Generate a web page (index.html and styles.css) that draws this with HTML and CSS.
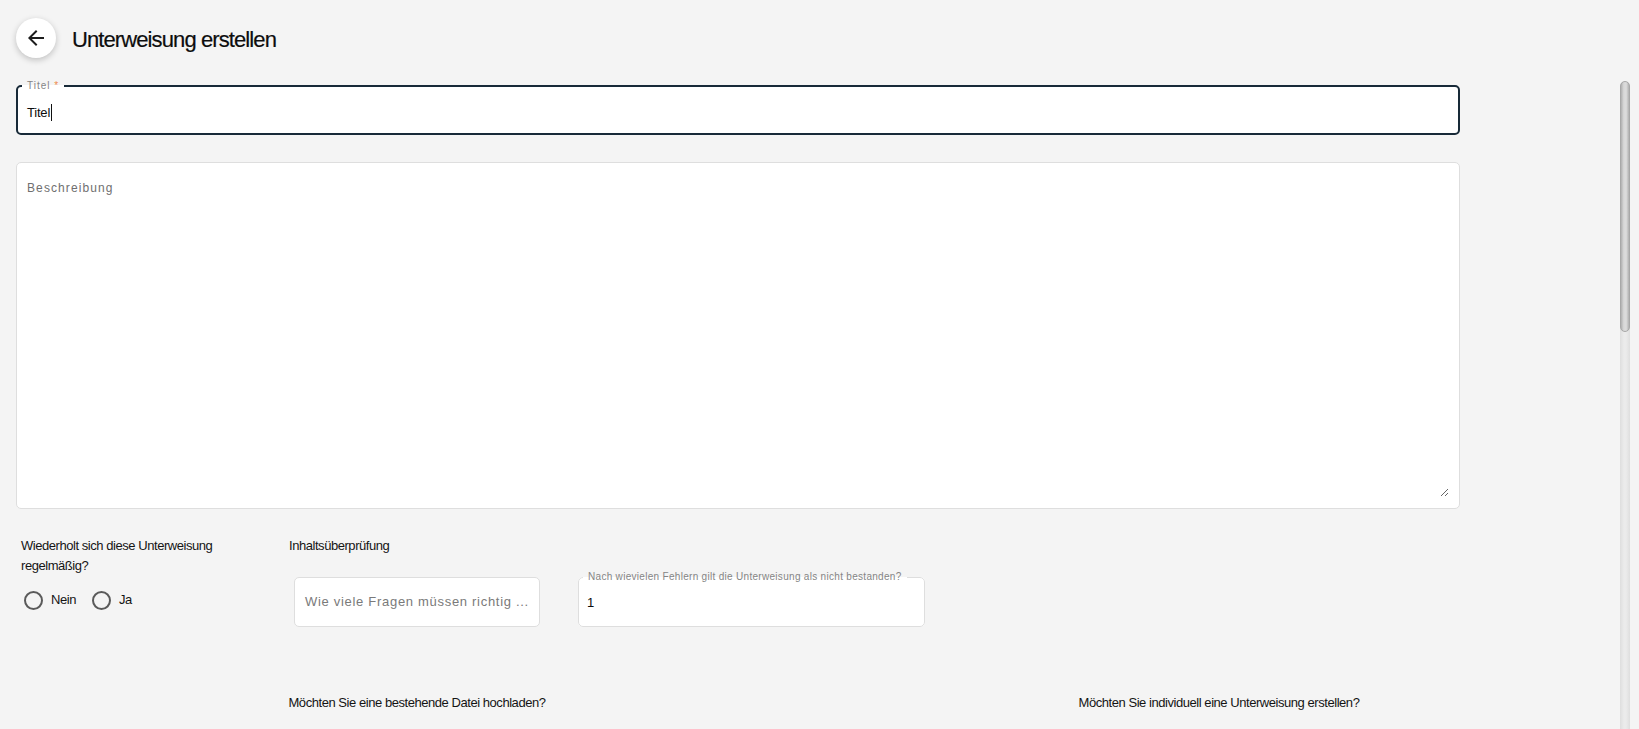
FILE: index.html
```html
<!DOCTYPE html>
<html lang="de">
<head>
    <meta charset="UTF-8">
    <title>Unterweisung erstellen</title>
    <link rel="stylesheet" href="styles.css">
</head>
<body>
    <div id="page">
        <div id="top-bar">
            <button class="back-btn" type="button">
                <svg width="24" height="24" viewBox="0 0 24 24"><path d="M20 11H7.83l5.59-5.59L12 4l-8 8 8 8 1.41-1.41L7.83 13H20v-2z" fill="#1d1d1d"/></svg>
            </button>
            <h1 class="page-title">Unterweisung erstellen</h1>
        </div>
        <div id="main">
            <div id="scroll-box">
                <div class="form">
                    <fieldset class="field field-focus">
                        <legend>Titel <span class="req">*</span></legend>
                        <div class="field-value">Titel<span class="caret"></span></div>
                    </fieldset>

                    <div class="area-box">
                        <textarea class="area" placeholder="Beschreibung"></textarea>
                    </div>

                    <div class="options">
                        <div class="repeat">
                            <p class="label">Wiederholt sich diese Unterweisung regelmäßig?</p>
                            <div class="radios">
                                <label class="radio"><span class="dot"></span>Nein</label>
                                <label class="radio"><span class="dot"></span>Ja</label>
                            </div>
                        </div>
                        <div class="check">
                            <p class="label">Inhaltsüberprüfung</p>
                            <div class="check-row">
                                <div class="plain-input">Wie viele Fragen müssen richtig ...</div>
                                <fieldset class="field field-small">
                                    <legend>Nach wievielen Fehlern gilt die Unterweisung als nicht bestanden?</legend>
                                    <div class="field-value">1</div>
                                </fieldset>
                            </div>
                        </div>
                    </div>
                </div>

                <div class="choose">
                    <p class="label">Möchten Sie eine bestehende Datei hochladen?</p>
                    <p class="label">Möchten Sie individuell eine Unterweisung erstellen?</p>
                </div>
            </div>
            <div class="scrollbar">
                <div class="thumb"></div>
            </div>
        </div>
    </div>
</body>
</html>
```

FILE: styles.css
```css
*{
    margin: 0;
    padding: 0;
    box-sizing: border-box;
}
html,body{
    height: 100%;
    overflow: hidden;
}
body{
    background: #f4f4f4;
    font-family: "Liberation Sans", Arial, sans-serif;
    color: #141414;
    font-size: 13px;
    letter-spacing: -0.45px;
}
#page{
    height: 100%;
    display: flex;
    flex-direction: column;
}
#top-bar{
    height: 78px;
    flex: none;
    display: flex;
    align-items: center;
    gap: 16px;
    padding: 0 16px 2px;
}
.back-btn{
    width: 40px;
    height: 40px;
    border: none;
    border-radius: 50%;
    background: #fff;
    box-shadow: 0 2px 6px rgba(0,0,0,0.22);
    display: flex;
    align-items: center;
    justify-content: center;
}
.page-title{
    font-size: 22px;
    font-weight: normal;
    color: #0d0d0d;
    letter-spacing: -0.9px;
    padding-top: 4px;
    -webkit-text-stroke: 0.2px #0d0d0d;
}
#main{
    flex: 1;
    display: flex;
    min-height: 0;
}
#scroll-box{
    flex: 1;
    overflow: hidden;
}
.scrollbar{
    width: 10px;
    margin: 3px 9px 0 0;
    border-radius: 5px 5px 0 0;
    background: linear-gradient(to right, #dedede, #ebebeb 40%, #ebebeb 60%, #dedede);
}
.thumb{
    height: 251px;
    border-radius: 5px;
    border: 1px solid #a8a8a8;
    background: linear-gradient(to right, #b0b0b0, #d8d8d8 35%, #dcdcdc 65%, #b0b0b0);
}
.form{
    width: 1444px;
    margin-left: 16px;
    padding-top: 2px;
}
.field{
    border: 1px solid #dedede;
    border-radius: 5px;
    background: #fff;
    padding: 0 4px;
    min-width: 0;
}
.field legend{
    font-size: 10px;
    line-height: 12px;
    padding: 0 5px;
    color: #858585;
    letter-spacing: 1px;
    white-space: nowrap;
}
.req{
    color: #ef8a4c;
}
.field-focus{
    border: 2px solid #182a38;
    height: 55px;
}
.field-value{
    padding: 11px 5px 0;
    line-height: 20px;
    font-size: 13px;
    letter-spacing: -0.2px;
    color: #0d0d0d;
}
.caret{
    display: inline-block;
    width: 1px;
    height: 17px;
    background: #111;
    vertical-align: -4px;
    margin-left: 1px;
}
.area-box{
    margin-top: 27px;
    height: 347px;
    background: #fff;
    border: 1px solid #dedede;
    border-radius: 5px;
    padding: 15px 10px 11px;
}
.area{
    width: 100%;
    height: 100%;
    border: none;
    outline: none;
    background: transparent;
    resize: vertical;
    font-family: inherit;
    font-size: 12px;
    line-height: 20px;
    letter-spacing: 1.1px;
}
.area::placeholder{
    color: #6f6f6f;
}
.options{
    display: flex;
    margin-top: 27px;
}
.label{
    font-size: 13px;
    line-height: 20px;
}
.repeat{
    width: 273px;
    padding: 0 68px 0 5px;
}
.radios{
    display: flex;
    gap: 16px;
    margin-top: 14px;
    padding-left: 3px;
}
.radio{
    display: flex;
    align-items: center;
    gap: 8px;
    line-height: 20px;
}
.dot{
    width: 19px;
    height: 19px;
    border: 2px solid #5a5a5a;
    border-radius: 50%;
}
.check-row{
    display: flex;
    align-items: flex-end;
    gap: 38px;
    margin-top: 15px;
    padding-left: 5px;
}
.plain-input{
    width: 246px;
    height: 50px;
    background: #fff;
    border: 1px solid #dedede;
    border-radius: 5px;
    padding: 0 10px;
    line-height: 48px;
    color: #7a7a7a;
    letter-spacing: 0.7px;
    white-space: nowrap;
}
.field-small{
    width: 347px;
    height: 56px;
}
.field-small legend{
    letter-spacing: 0.3px;
}
.field-small .field-value{
    padding: 10px 0 0 4px;
}
.choose{
    display: grid;
    grid-template-columns: 1fr 1fr;
    margin-left: 16px;
    padding-top: 66px;
    text-align: center;
}
```
